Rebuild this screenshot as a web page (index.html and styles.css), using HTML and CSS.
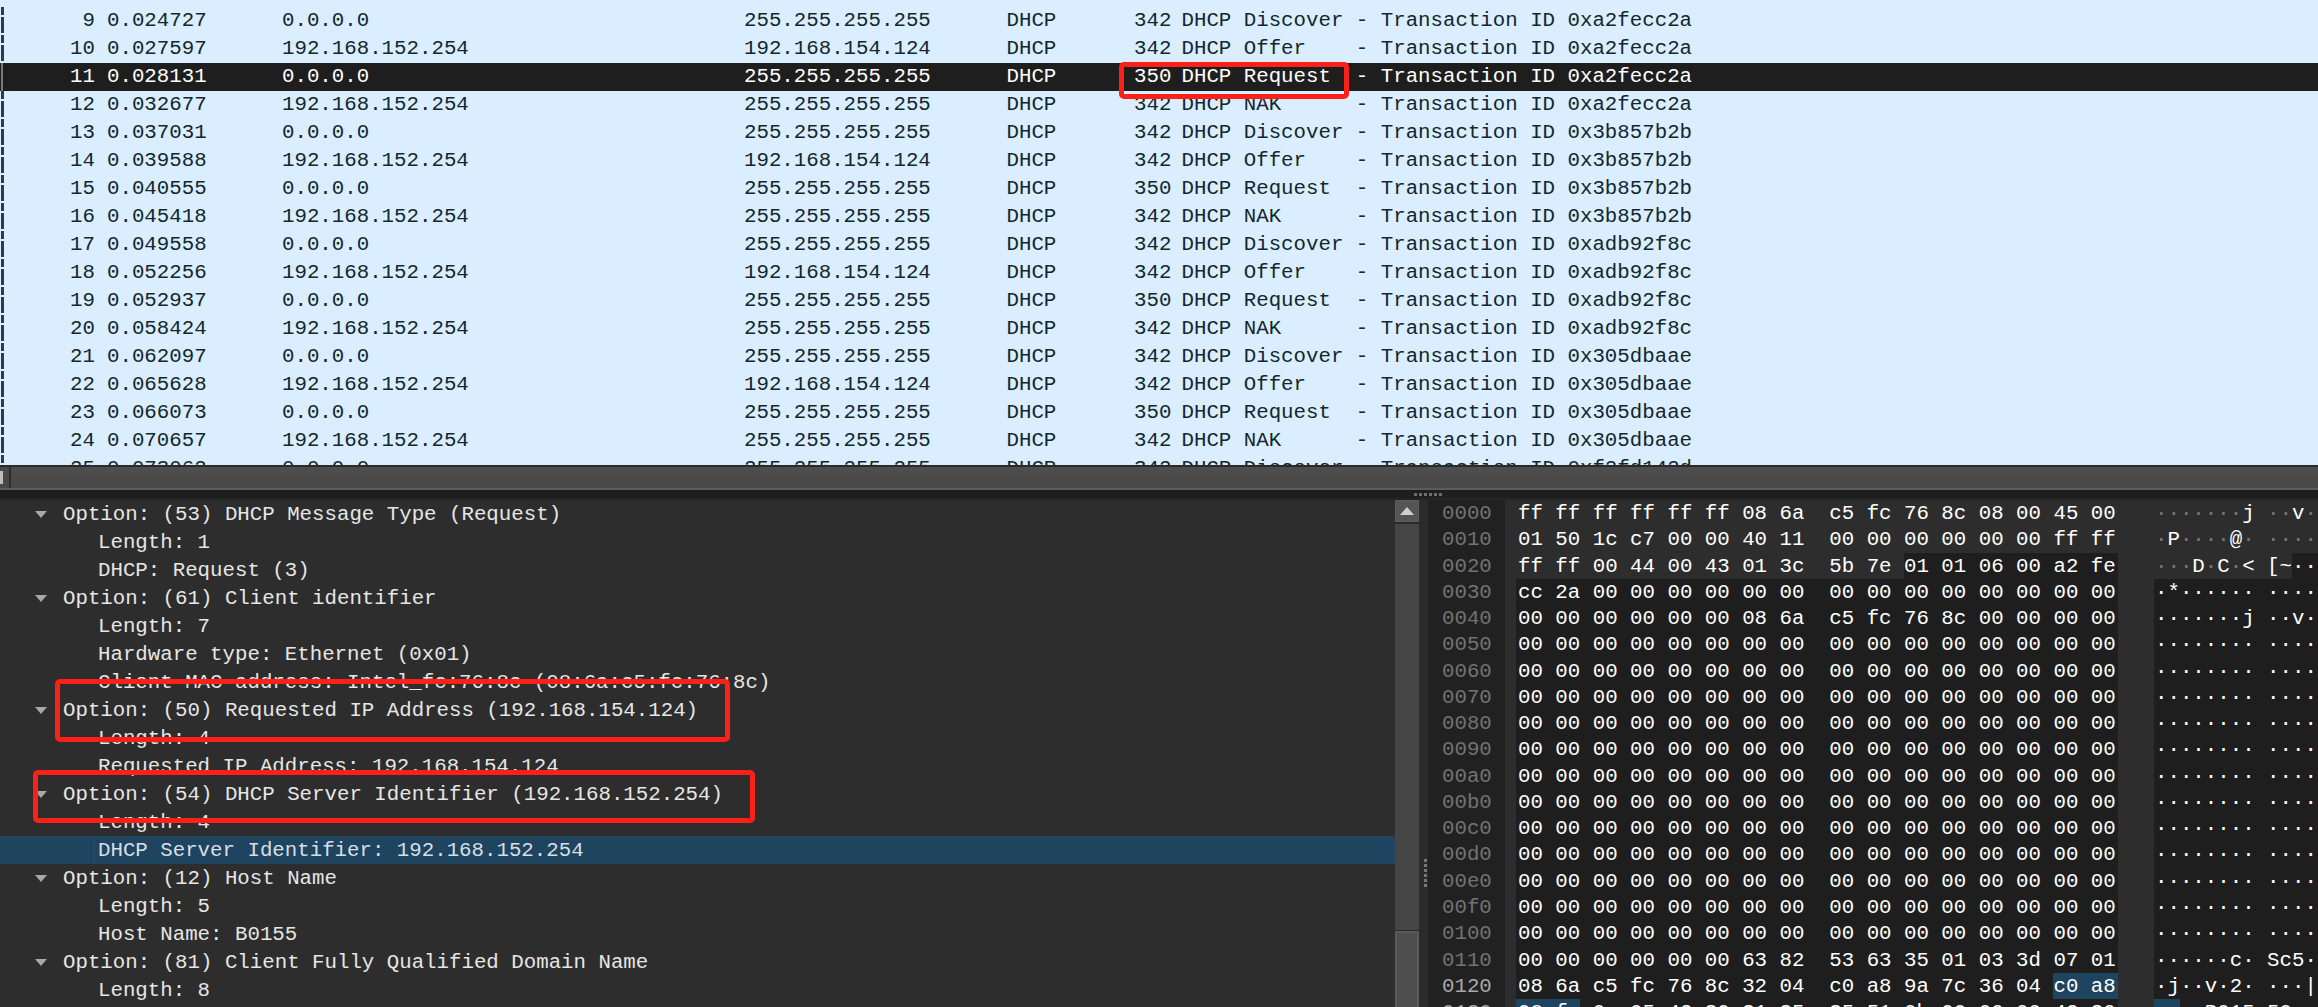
FILE: index.html
```html
<!DOCTYPE html>
<html lang="en">
<head>
<meta charset="utf-8">
<title>DHCP capture</title>
<link rel="stylesheet" href="styles.css">
</head>
<body>
<div class="app">
  <section class="packets">
    <div class="pk"><i class="mk"></i><span class="no">9</span><span class="tm">0.024727</span><span class="ad">0.0.0.0</span><span class="ds">255.255.255.255</span><span class="pr">DHCP</span><span class="ln">342</span><span class="in">DHCP Discover - Transaction ID 0xa2fecc2a</span></div>
    <div class="pk"><i class="mk"></i><span class="no">10</span><span class="tm">0.027597</span><span class="ad">192.168.152.254</span><span class="ds">192.168.154.124</span><span class="pr">DHCP</span><span class="ln">342</span><span class="in">DHCP Offer    - Transaction ID 0xa2fecc2a</span></div>
    <div class="pk cur"><i class="mk"></i><span class="no">11</span><span class="tm">0.028131</span><span class="ad">0.0.0.0</span><span class="ds">255.255.255.255</span><span class="pr">DHCP</span><span class="ln">350</span><span class="in">DHCP Request  - Transaction ID 0xa2fecc2a</span></div>
    <div class="pk"><i class="mk"></i><span class="no">12</span><span class="tm">0.032677</span><span class="ad">192.168.152.254</span><span class="ds">255.255.255.255</span><span class="pr">DHCP</span><span class="ln">342</span><span class="in">DHCP NAK      - Transaction ID 0xa2fecc2a</span></div>
    <div class="pk"><i class="mk"></i><span class="no">13</span><span class="tm">0.037031</span><span class="ad">0.0.0.0</span><span class="ds">255.255.255.255</span><span class="pr">DHCP</span><span class="ln">342</span><span class="in">DHCP Discover - Transaction ID 0x3b857b2b</span></div>
    <div class="pk"><i class="mk"></i><span class="no">14</span><span class="tm">0.039588</span><span class="ad">192.168.152.254</span><span class="ds">192.168.154.124</span><span class="pr">DHCP</span><span class="ln">342</span><span class="in">DHCP Offer    - Transaction ID 0x3b857b2b</span></div>
    <div class="pk"><i class="mk"></i><span class="no">15</span><span class="tm">0.040555</span><span class="ad">0.0.0.0</span><span class="ds">255.255.255.255</span><span class="pr">DHCP</span><span class="ln">350</span><span class="in">DHCP Request  - Transaction ID 0x3b857b2b</span></div>
    <div class="pk"><i class="mk"></i><span class="no">16</span><span class="tm">0.045418</span><span class="ad">192.168.152.254</span><span class="ds">255.255.255.255</span><span class="pr">DHCP</span><span class="ln">342</span><span class="in">DHCP NAK      - Transaction ID 0x3b857b2b</span></div>
    <div class="pk"><i class="mk"></i><span class="no">17</span><span class="tm">0.049558</span><span class="ad">0.0.0.0</span><span class="ds">255.255.255.255</span><span class="pr">DHCP</span><span class="ln">342</span><span class="in">DHCP Discover - Transaction ID 0xadb92f8c</span></div>
    <div class="pk"><i class="mk"></i><span class="no">18</span><span class="tm">0.052256</span><span class="ad">192.168.152.254</span><span class="ds">192.168.154.124</span><span class="pr">DHCP</span><span class="ln">342</span><span class="in">DHCP Offer    - Transaction ID 0xadb92f8c</span></div>
    <div class="pk"><i class="mk"></i><span class="no">19</span><span class="tm">0.052937</span><span class="ad">0.0.0.0</span><span class="ds">255.255.255.255</span><span class="pr">DHCP</span><span class="ln">350</span><span class="in">DHCP Request  - Transaction ID 0xadb92f8c</span></div>
    <div class="pk"><i class="mk"></i><span class="no">20</span><span class="tm">0.058424</span><span class="ad">192.168.152.254</span><span class="ds">255.255.255.255</span><span class="pr">DHCP</span><span class="ln">342</span><span class="in">DHCP NAK      - Transaction ID 0xadb92f8c</span></div>
    <div class="pk"><i class="mk"></i><span class="no">21</span><span class="tm">0.062097</span><span class="ad">0.0.0.0</span><span class="ds">255.255.255.255</span><span class="pr">DHCP</span><span class="ln">342</span><span class="in">DHCP Discover - Transaction ID 0x305dbaae</span></div>
    <div class="pk"><i class="mk"></i><span class="no">22</span><span class="tm">0.065628</span><span class="ad">192.168.152.254</span><span class="ds">192.168.154.124</span><span class="pr">DHCP</span><span class="ln">342</span><span class="in">DHCP Offer    - Transaction ID 0x305dbaae</span></div>
    <div class="pk"><i class="mk"></i><span class="no">23</span><span class="tm">0.066073</span><span class="ad">0.0.0.0</span><span class="ds">255.255.255.255</span><span class="pr">DHCP</span><span class="ln">350</span><span class="in">DHCP Request  - Transaction ID 0x305dbaae</span></div>
    <div class="pk"><i class="mk"></i><span class="no">24</span><span class="tm">0.070657</span><span class="ad">192.168.152.254</span><span class="ds">255.255.255.255</span><span class="pr">DHCP</span><span class="ln">342</span><span class="in">DHCP NAK      - Transaction ID 0x305dbaae</span></div>
    <div class="pk"><i class="mk"></i><span class="no">25</span><span class="tm">0.073062</span><span class="ad">0.0.0.0</span><span class="ds">255.255.255.255</span><span class="pr">DHCP</span><span class="ln">342</span><span class="in">DHCP Discover - Transaction ID 0xf2fd142d</span></div>
  </section>

  <div class="hbar">
    <div class="hbtn"><i class="harrow"></i></div>
    <div class="hthumb"></div>
  </div>
  <div class="sep"><i class="hgrip"></i></div>

  <section class="lower">
    <div class="tree">
      <div class="nd"><svg class="tw" viewBox="0 0 12 7"><path d="M0 0H12L6 7Z"/></svg>Option: (53) DHCP Message Type (Request)</div>
      <div class="lf">Length: 1</div>
      <div class="lf">DHCP: Request (3)</div>
      <div class="nd"><svg class="tw" viewBox="0 0 12 7"><path d="M0 0H12L6 7Z"/></svg>Option: (61) Client identifier</div>
      <div class="lf">Length: 7</div>
      <div class="lf">Hardware type: Ethernet (0x01)</div>
      <div class="lf">Client MAC address: Intel_fc:76:8c (08:6a:c5:fc:76:8c)</div>
      <div class="nd"><svg class="tw" viewBox="0 0 12 7"><path d="M0 0H12L6 7Z"/></svg>Option: (50) Requested IP Address (192.168.154.124)</div>
      <div class="lf">Length: 4</div>
      <div class="lf">Requested IP Address: 192.168.154.124</div>
      <div class="nd"><svg class="tw" viewBox="0 0 12 7"><path d="M0 0H12L6 7Z"/></svg>Option: (54) DHCP Server Identifier (192.168.152.254)</div>
      <div class="lf">Length: 4</div>
      <div class="lf on"><span class="ontx">DHCP Server Identifier: 192.168.152.254</span></div>
      <div class="nd"><svg class="tw" viewBox="0 0 12 7"><path d="M0 0H12L6 7Z"/></svg>Option: (12) Host Name</div>
      <div class="lf">Length: 5</div>
      <div class="lf">Host Name: B0155</div>
      <div class="nd"><svg class="tw" viewBox="0 0 12 7"><path d="M0 0H12L6 7Z"/></svg>Option: (81) Client Fully Qualified Domain Name</div>
      <div class="lf">Length: 8</div>
    </div>

    <div class="vbar">
      <div class="vbtn"><svg class="up" viewBox="0 0 14 8"><path d="M7 0L14 8H0Z"/></svg></div>
      <div class="vthumb"></div>
      <div class="vtrack"></div>
    </div>
    <div class="gutter"><i class="vgrip"></i></div>

    <div class="hexpane">
      <div class="hr lt"><span class="of">0000</span><span class="pad"></span><span class="hx"><span class="b lead">ff ff ff ff ff ff 08 6a  c5 fc 76 8c 08 00 45 00</span></span><span class="gp"></span><span class="as"><span class="b"><em>·······</em>j <em>··</em>v<em>·</em></span></span></div>
      <div class="hr lt"><span class="of">0010</span><span class="pad"></span><span class="hx"><span class="b lead">01 50 1c c7 00 00 40 11  00 00 00 00 00 00 ff ff</span></span><span class="gp"></span><span class="as"><span class="b"><em>·</em>P<em>····</em>@<em>·</em> <em>····</em></span></span></div>
      <div class="hr"><span class="of">0020</span><span class="pad"></span><span class="hx"><span class="b lead lg">ff ff 00 44 00 43 01 3c  5b 7e </span><span class="b">01 01 06 00 a2 fe</span></span><span class="gp"></span><span class="as"><span class="b lg"><em>···</em>D<em>·</em>C<em>·</em>&lt; [~</span><span class="b">··</span></span></div>
      <div class="hr"><span class="of">0030</span><span class="pad"></span><span class="hx"><span class="b lead">cc 2a 00 00 00 00 00 00  00 00 00 00 00 00 00 00</span></span><span class="gp"></span><span class="as"><span class="b">·*······ ····</span></span></div>
      <div class="hr"><span class="of">0040</span><span class="pad"></span><span class="hx"><span class="b lead">00 00 00 00 00 00 08 6a  c5 fc 76 8c 00 00 00 00</span></span><span class="gp"></span><span class="as"><span class="b">·······j ··v·</span></span></div>
      <div class="hr"><span class="of">0050</span><span class="pad"></span><span class="hx"><span class="b lead">00 00 00 00 00 00 00 00  00 00 00 00 00 00 00 00</span></span><span class="gp"></span><span class="as"><span class="b">········ ····</span></span></div>
      <div class="hr"><span class="of">0060</span><span class="pad"></span><span class="hx"><span class="b lead">00 00 00 00 00 00 00 00  00 00 00 00 00 00 00 00</span></span><span class="gp"></span><span class="as"><span class="b">········ ····</span></span></div>
      <div class="hr"><span class="of">0070</span><span class="pad"></span><span class="hx"><span class="b lead">00 00 00 00 00 00 00 00  00 00 00 00 00 00 00 00</span></span><span class="gp"></span><span class="as"><span class="b">········ ····</span></span></div>
      <div class="hr"><span class="of">0080</span><span class="pad"></span><span class="hx"><span class="b lead">00 00 00 00 00 00 00 00  00 00 00 00 00 00 00 00</span></span><span class="gp"></span><span class="as"><span class="b">········ ····</span></span></div>
      <div class="hr"><span class="of">0090</span><span class="pad"></span><span class="hx"><span class="b lead">00 00 00 00 00 00 00 00  00 00 00 00 00 00 00 00</span></span><span class="gp"></span><span class="as"><span class="b">········ ····</span></span></div>
      <div class="hr"><span class="of">00a0</span><span class="pad"></span><span class="hx"><span class="b lead">00 00 00 00 00 00 00 00  00 00 00 00 00 00 00 00</span></span><span class="gp"></span><span class="as"><span class="b">········ ····</span></span></div>
      <div class="hr"><span class="of">00b0</span><span class="pad"></span><span class="hx"><span class="b lead">00 00 00 00 00 00 00 00  00 00 00 00 00 00 00 00</span></span><span class="gp"></span><span class="as"><span class="b">········ ····</span></span></div>
      <div class="hr"><span class="of">00c0</span><span class="pad"></span><span class="hx"><span class="b lead">00 00 00 00 00 00 00 00  00 00 00 00 00 00 00 00</span></span><span class="gp"></span><span class="as"><span class="b">········ ····</span></span></div>
      <div class="hr"><span class="of">00d0</span><span class="pad"></span><span class="hx"><span class="b lead">00 00 00 00 00 00 00 00  00 00 00 00 00 00 00 00</span></span><span class="gp"></span><span class="as"><span class="b">········ ····</span></span></div>
      <div class="hr"><span class="of">00e0</span><span class="pad"></span><span class="hx"><span class="b lead">00 00 00 00 00 00 00 00  00 00 00 00 00 00 00 00</span></span><span class="gp"></span><span class="as"><span class="b">········ ····</span></span></div>
      <div class="hr"><span class="of">00f0</span><span class="pad"></span><span class="hx"><span class="b lead">00 00 00 00 00 00 00 00  00 00 00 00 00 00 00 00</span></span><span class="gp"></span><span class="as"><span class="b">········ ····</span></span></div>
      <div class="hr"><span class="of">0100</span><span class="pad"></span><span class="hx"><span class="b lead">00 00 00 00 00 00 00 00  00 00 00 00 00 00 00 00</span></span><span class="gp"></span><span class="as"><span class="b">········ ····</span></span></div>
      <div class="hr"><span class="of">0110</span><span class="pad"></span><span class="hx"><span class="b lead">00 00 00 00 00 00 63 82  53 63 35 01 03 3d 07 01</span></span><span class="gp"></span><span class="as"><span class="b">······c· Sc5·</span></span></div>
      <div class="hr"><span class="of hot">0120</span><span class="pad"></span><span class="hx"><span class="b lead">08 6a c5 fc 76 8c 32 04  c0 a8 9a 7c 36 04 </span><span class="b sel tail">c0 a8</span></span><span class="gp"></span><span class="as"><span class="b">·j··v·2· ···|</span></span></div>
      <div class="hr"><span class="of hot">0130</span><span class="pad"></span><span class="hx"><span class="b lead sel">98 fe</span><span class="b"> 0c 05 42 30 31 35  35 51 0b 00 00 00 42 30</span></span><span class="gp"></span><span class="as"><span class="b sel">··</span><span class="b">··B015 5Q··</span></span></div>
    </div>
  </section>

  <div class="mark m1"></div>
  <div class="mark m2"></div>
  <div class="mark m3"></div>
</div>
</body>
</html>
```
FILE: styles.css
```css
html, body { margin: 0; padding: 0; background: #2d2d2d; }
.app {
  position: relative;
  width: 2318px;
  height: 1007px;
  overflow: hidden;
  display: flex;
  flex-direction: column;
  font-family: "Liberation Mono", monospace;
  font-size: 20.76px;
}
.pk, .nd, .lf, .hr { white-space: pre; }

/* packet list */
.packets {
  height: 458px;
  padding-top: 7px;
  background: #daeeff;
  overflow: hidden;
  flex: none;
}
.pk {
  display: flex;
  height: 28px;
  line-height: 28px;
  color: #12272e;
}
.pk.cur { background: #1e1e1e; color: #fff; }
.mk {
  flex: none;
  width: 4px;
  background:
    linear-gradient(to right, #daeeff 0 1px, transparent 1px) 0 0 / 4px 28px no-repeat,
    linear-gradient(to bottom, #2b3d49 0 8px, #daeeff 8px 10px, #2b3d49 10px 26px, #daeeff 26px 28px);
}
.pk.cur .mk { background: linear-gradient(to right, #1e1e1e 0 1px, #777 1px 3px, #1e1e1e 3px); }
.no { flex: none; width: 91px; text-align: right; }
.tm { flex: none; width: 175px; padding-left: 12px; }
.ad { flex: none; width: 462px; }
.ds { flex: none; width: 262.5px; }
.pr { flex: none; width: 127.5px; }
.ln { flex: none; width: 36px; text-align: right; }
.in { flex: none; padding-left: 11.5px; }

/* horizontal scrollbar between panes */
.hbar {
  flex: none;
  display: flex;
  height: 25px;
  box-sizing: border-box;
  background: #4a4a4a;
  border-top: 2px solid #2a2a2a;
  border-bottom: 2px solid #5c5c5c;
}
.hbtn {
  flex: none;
  width: 9px;
  display: flex;
  align-items: center;
  background: #484848;
  border-right: 2px solid #2c2c2c;
}
.harrow { width: 3px; height: 13px; background: #bdbdbd; }
.hthumb { flex: 1; background: linear-gradient(#4e4e4e, #474747); }
.sep {
  flex: none;
  height: 10px;
  box-sizing: border-box;
  padding: 3px 0 0 1414px;
  background: #1e1e1e;
  border-bottom: 2px solid #242424;
}
.hgrip {
  display: block;
  width: 30px;
  height: 3px;
  background: repeating-linear-gradient(to right, #6e6e6e 0 3px, #1e1e1e 3px 5px);
}

/* lower panes */
.lower { flex: 1; display: flex; min-height: 0; }
.tree {
  flex: none;
  width: 1395px;
  color: #e6e6e6;
  overflow: hidden;
}
.nd, .lf { height: 28px; line-height: 30px; }
.nd { display: flex; align-items: flex-start; padding-left: 35px; }
.lf { padding-left: 98px; }
.tw { flex: none; width: 12px; height: 7px; margin: 11px 16px 0 0; fill: #a8a8a8; }
.lf.on {
  padding-left: 94px;
  background: #1f4460;
  color: #d6dfe6;
}
.ontx { display: block; height: 28px; padding-left: 3px; border-left: 1px solid #24506f; }

.vbar {
  flex: none;
  width: 24px;
  display: flex;
  flex-direction: column;
  background: #454545;
}
.vbtn {
  flex: none;
  height: 22px;
  box-sizing: border-box;
  display: flex;
  align-items: center;
  justify-content: center;
  background: #555;
  border: 1px solid #5d5d5d;
}
.up { width: 14px; height: 8px; fill: #d0d0d0; }
.vthumb { flex: none; height: 406px; background: #454545; border-top: 2px solid #2a2a2a; border-bottom: 1px solid #272727; }
.vtrack { flex: 1; background: #4e4e4e; border: 2px solid #5a5a5a; border-bottom: 0; }

.gutter { flex: none; width: 9px; background: #2b2b2b; padding-top: 359px; box-sizing: border-box; }
.vgrip {
  display: block;
  width: 3px;
  height: 29px;
  margin-left: 5px;
  background: repeating-linear-gradient(to bottom, #777 0 3px, #2b2b2b 3px 5px);
}

.hexpane { flex: 1; min-width: 0; overflow: hidden; background: #1e1e1e; }
.hr { display: flex; height: 26.28px; line-height: 25.28px; color: #fff; }
.of {
  flex: none;
  width: 63px;
  padding: 1px 0 0 14px;
  background: #212121;
  color: #737373;
}
.of.hot { color: #a9a9a9; }
.pad { flex: none; width: 11px; background: #2d2d2d; }
.hx { flex: none; width: 602px; display: flex; background: #1e1e1e; }
.gp { flex: none; width: 36px; background: #2d2d2d; }
.as { flex: 1; display: flex; background: #1e1e1e; }
.b { display: block; flex: none; padding-top: 1px; }
.lead { padding-left: 2px; }
.as > .b:first-child { padding-left: 1px; }
.lt .hx, .lt .as, .lg { background: #2d2d2d; }
.as em { font-style: normal; color: #767676; }
.sel { background: #1f4460; }
.tail { padding-right: 2px; }

/* red annotation boxes drawn over the screenshot */
.mark {
  position: absolute;
  box-sizing: border-box;
  border: 5px solid #fb2018;
  border-radius: 5px;
}
.m1 { left: 1119px; top: 62px; width: 230px; height: 37px; }
.m2 { left: 55px; top: 679px; width: 675px; height: 63px; }
.m3 { left: 33px; top: 770px; width: 722px; height: 53px; }
```
